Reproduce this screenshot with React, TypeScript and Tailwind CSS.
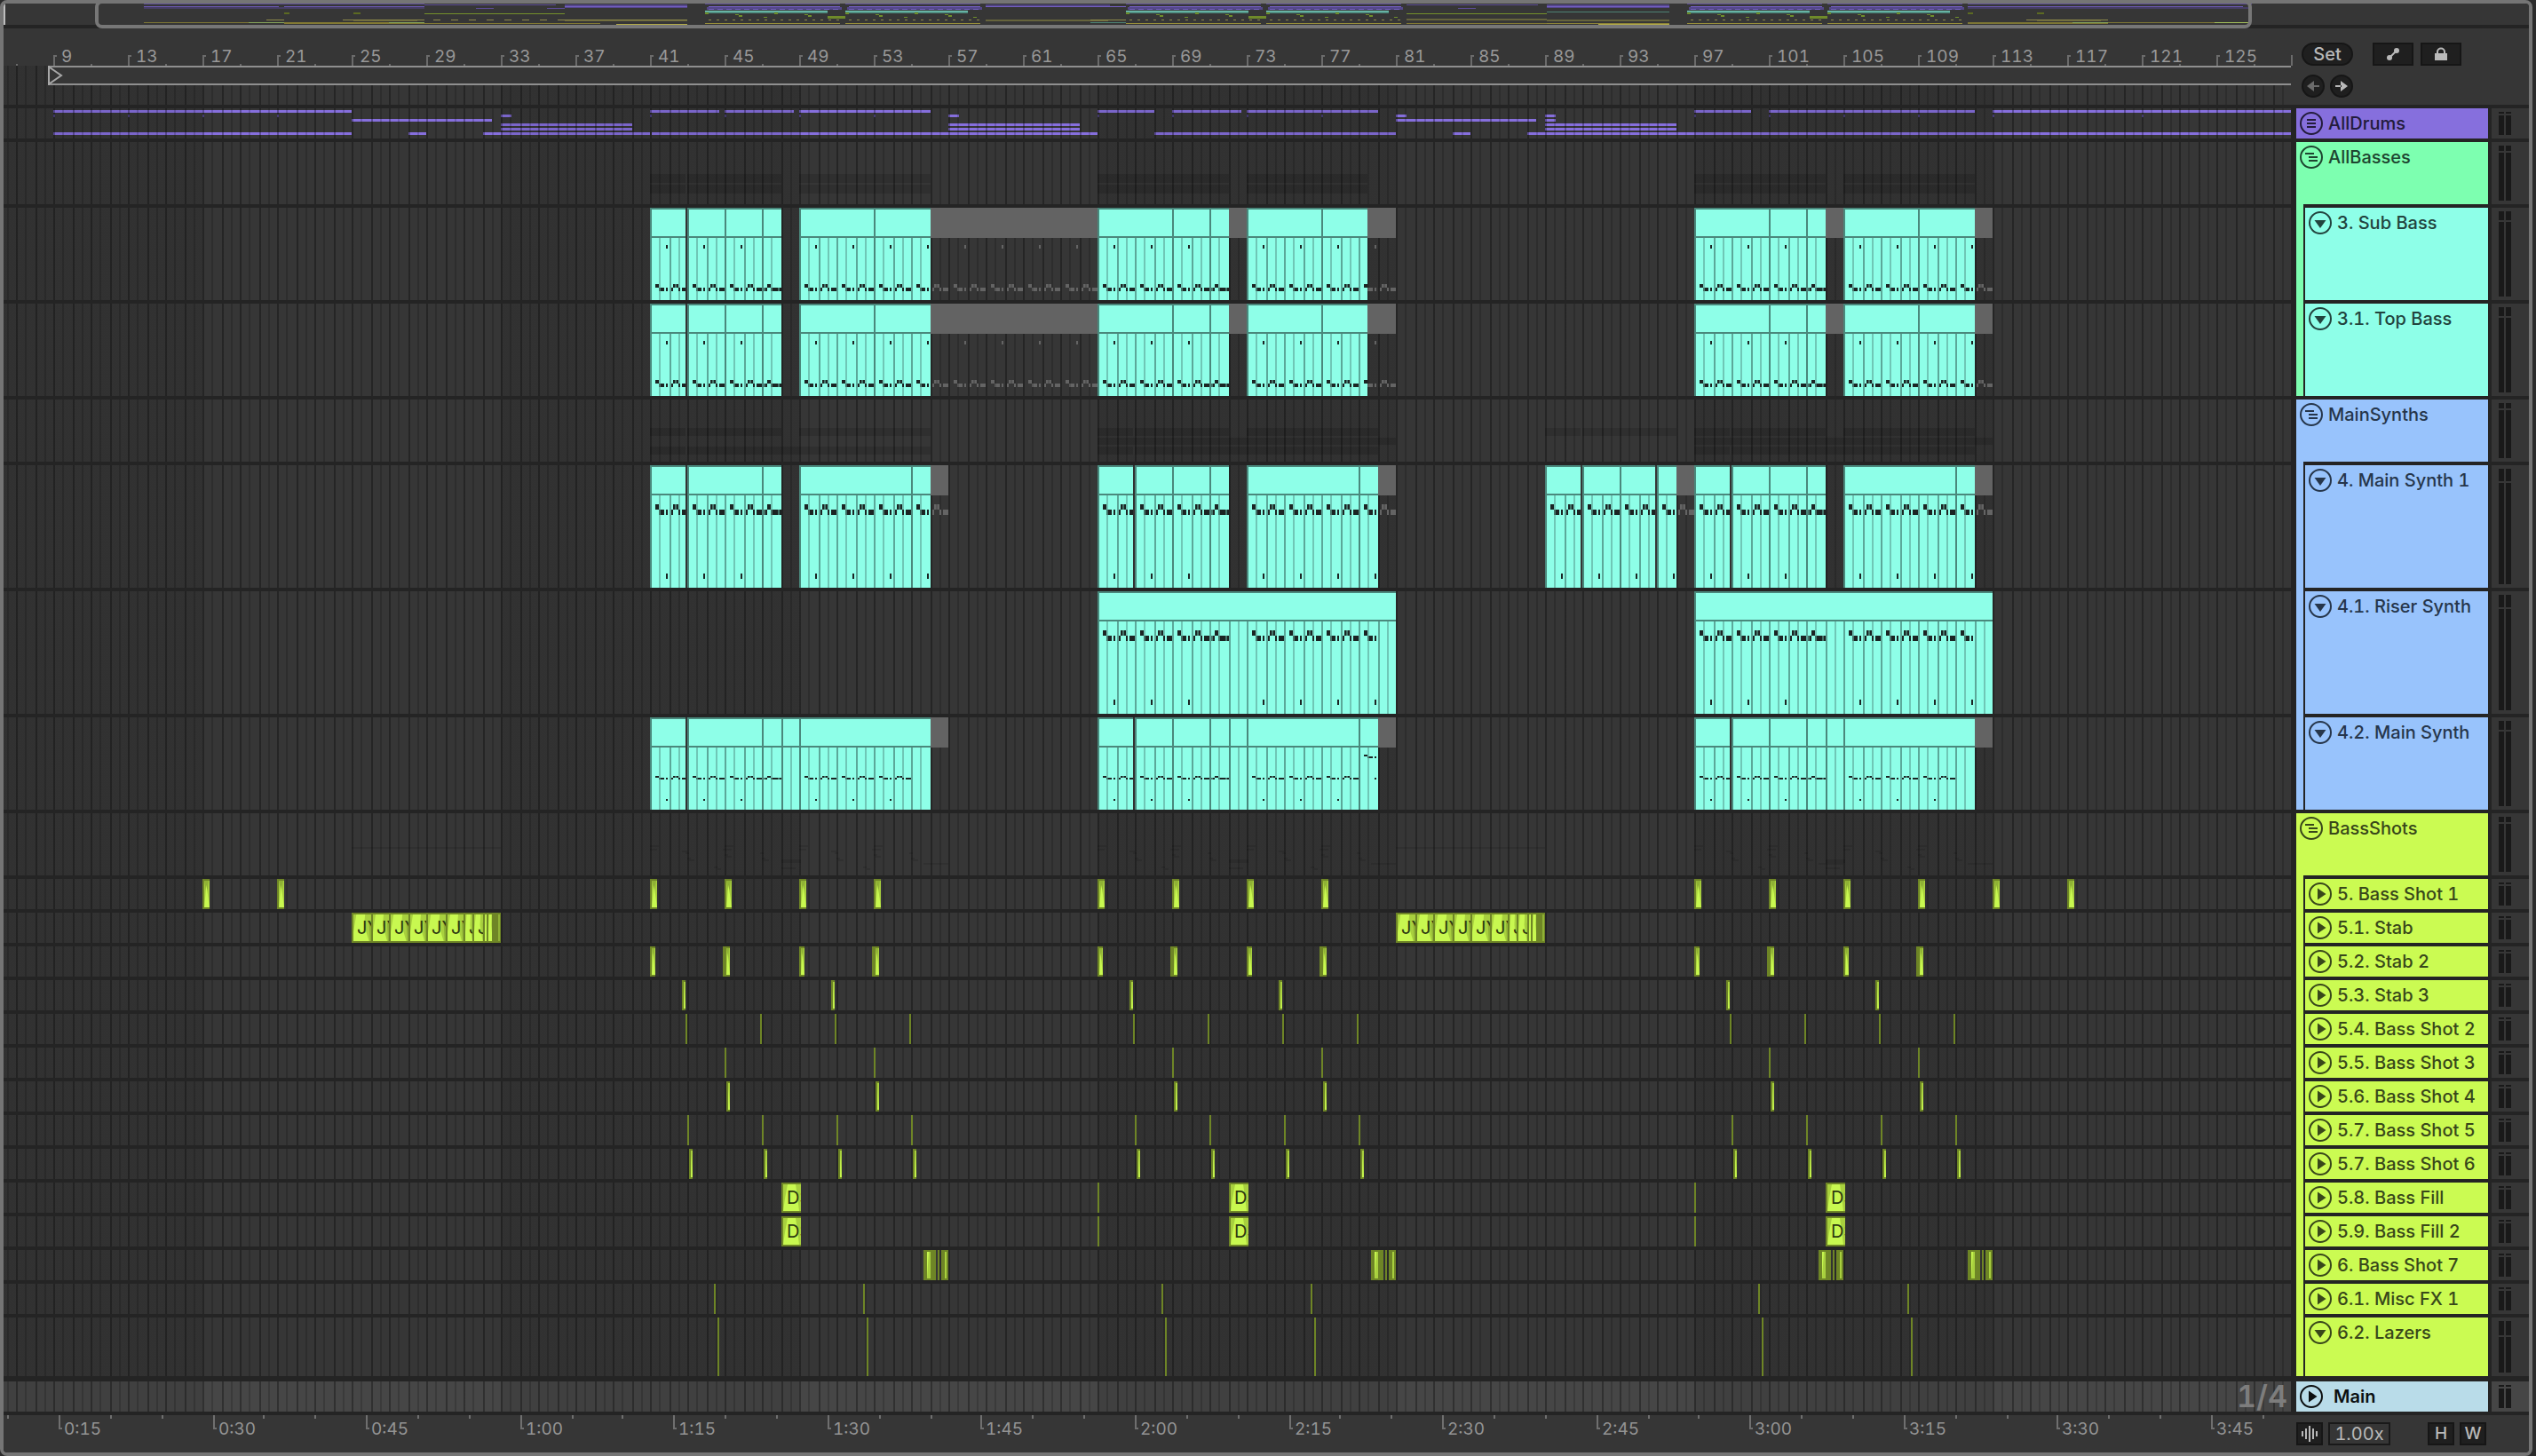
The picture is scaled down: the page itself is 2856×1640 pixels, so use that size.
import type { ReactNode } from 'react';

const BAR = 21;
const FIRST_BAR_X = 56;

// Bar number -> x inside a lane, snapped to 2px
const X = (bar: number) => 2 * Math.round((FIRST_BAR_X + (bar - 9) * BAR) / 2);

const GRID =
  'bg-[repeating-linear-gradient(90deg,transparent_0_4px,#0000002c_4px_6px,transparent_6px_14px,#00000050_14px_16px,transparent_16px_24px,#0000002c_24px_26px,transparent_26px_36px,#00000050_36px_38px,transparent_38px_42px),repeating-linear-gradient(90deg,#00000016_0_224px,transparent_224px_560px,#00000016_560px_672px)]';

const LIME = '#c8f850';
const LIME_DARK = '#6e8526';
const LIME_MID = '#a8d03e';
const CYAN = '#8effe8';
const CYAN_EDGE = '#4a887c';
const PURPLE = '#866fdd';

type Span = [number, number];

/* ---------- MIDI clips ---------- */

type NoteRows = { hi: number; low: number; dot: number; size: number };

// [offset, width, row, faded]
type Cell = [number, number, 'hi' | 'low' | 'dot', boolean?];

const RIFF: Cell[] = [
  [6, 4, 'hi'],
  [10, 2, 'low', true],
  [12, 4, 'low'],
  [18, 2, 'low'],
  [18, 2, 'dot'],
  [24, 2, 'low'],
  [26, 2, 'hi'],
  [28, 2, 'hi', true],
  [30, 2, 'hi'],
  [32, 2, 'low'],
  [36, 6, 'low'],
];

const TURN: Cell[] = [
  [2, 2, 'low', true],
  [4, 2, 'low'],
  [6, 4, 'hi'],
  [10, 2, 'low', true],
  [12, 6, 'low'],
  [18, 2, 'low', true],
  [20, 2, 'low'],
];

const TURN_BARS = [47, 71, 103];

const Notes = ({ from, to, rows, muted }: { from: number; to: number; rows: NoteRows; muted?: boolean }) => {
  const x0 = X(from);
  const x1 = X(to);
  const first = from % 2 >= 1 ? Math.floor(from) : Math.floor(from) - 1;
  const out: ReactNode[] = [];
  for (let base = first; base < to; base += 2) {
    const cells = !muted && TURN_BARS.includes(base) ? TURN : RIFF;
    cells.forEach(([dx, w, row, faded], i) => {
      const x = X(base) + dx;
      if (x < x0 || x >= x1) return;
      const fill = muted ? (faded ? '#555555' : '#646464') : faded ? '#437469' : '#1b2423';
      out.push(
        <rect key={`${base}-${i}`} x={x} y={rows[row]} width={Math.min(w, x1 - x)} height={rows.size} fill={fill} />
      );
    });
  }
  return <>{out}</>;
};

const MidiClip = ({ span, height }: { span: Span; height: number }) => {
  const x = X(span[0]);
  const w = X(span[1]) - x;
  const lines: ReactNode[] = [];
  for (let b = span[0] + 0.5; X(b) < x + w; b += 0.5) {
    lines.push(
      <rect key={b} x={X(b)} y={34} width={2} height={height - 34} fill={b % 1 ? '#6fc7b6' : '#5ba899'} />
    );
  }
  return (
    <g>
      <rect x={x} width={w} height={height} fill={CYAN} />
      {lines}
      <rect x={x} width={w} height={2} fill={CYAN_EDGE} />
      <rect x={x} y={32} width={w} height={2} fill={CYAN_EDGE} />
      <rect x={x} width={2} height={height} fill={CYAN_EDGE} />
    </g>
  );
};

type MidiProps = {
  height: number;
  rows: NoteRows;
  clips: Span[];
  notes: Span[];
  muted?: Span[];
  mutedNotes?: Span[];
};

const MidiLane = ({ height, rows, clips, notes, muted = [], mutedNotes = [] }: MidiProps) => (
  <>
    {clips.map((c) => (
      <MidiClip key={c[0]} span={c} height={height} />
    ))}
    {muted.map(([a, b]) => (
      <rect key={a} x={X(a)} width={X(b) - X(a)} height={34} fill="#636363" />
    ))}
    {notes.map(([a, b]) => (
      <Notes key={a} from={a} to={b} rows={rows} />
    ))}
    {mutedNotes.map(([a, b]) => (
      <Notes key={a} from={a} to={b} rows={rows} muted />
    ))}
  </>
);

const bassRows: NoteRows = { hi: 86, low: 90, dot: 42, size: 4 };
const synthRows: NoteRows = { hi: 44, low: 50, dot: 122, size: 6 };
const thinRows: NoteRows = { hi: 66, low: 68, dot: 92, size: 2 };
const thinHighRows: NoteRows = { hi: 42, low: 44, dot: 68, size: 2 };

const BassLane = ({ lastEnd }: { lastEnd: number }) => (
  <MidiLane
    height={104}
    rows={bassRows}
    clips={[
      [41, 42.9], [43, 45], [45, 47], [47, 48], [49, 53], [53, 56],
      [65, 69], [69, 71], [71, 72], [73, 77], [77, lastEnd],
      [97, 101], [101, 103], [103, 104], [105, 109], [109, 112],
    ]}
    notes={[[41, 42.9], [43, 48], [49, 56], [65, 72], [73, lastEnd], [97, 104], [105, 112]]}
    muted={[[56, 65], [72, 73], [lastEnd, 81], [104, 105], [112, 113]]}
    mutedNotes={[[56, 65], [lastEnd, 81], [112, 113]]}
  />
);

const MainSynthLane = () => (
  <MidiLane
    height={138}
    rows={synthRows}
    clips={[
      [41, 42.9], [43, 47], [47, 48], [49, 55], [55, 56],
      [65, 66.9], [67, 69], [69, 71], [71, 72], [73, 79], [79, 80],
      [89, 90.9], [91, 93], [93, 94.9], [95, 96],
      [97, 98.9], [99, 101], [101, 103], [103, 104], [105, 111], [111, 112],
    ]}
    notes={[[41, 42.9], [43, 48], [49, 56], [65, 66.9], [67, 72], [73, 80], [89, 90.9], [91, 94.9], [95, 96], [97, 98.9], [99, 104], [105, 112]]}
    muted={[[56, 57], [80, 81], [96, 97], [112, 113]]}
    mutedNotes={[[56, 57], [80, 81], [96, 97], [112, 113]]}
  />
);

const RiserLane = () => (
  <MidiLane
    height={138}
    rows={synthRows}
    clips={[[65, 81], [97, 113]]}
    notes={[[65, 72], [73, 80], [97, 104], [105, 112]]}
  />
);

const SecondSynthLane = () => (
  <>
    <MidiLane
      height={104}
      rows={thinRows}
      clips={[
        [41, 42.9], [43, 47], [47, 48], [48, 49], [49, 56],
        [65, 66.9], [67, 69], [69, 71], [71, 72], [72, 73], [73, 79], [79, 80],
        [97, 98.9], [99, 101], [101, 103], [103, 104], [104, 105], [105, 112],
      ]}
      notes={[[41, 42.9], [43, 48], [49, 55], [65, 66.9], [67, 72], [73, 79], [97, 98.9], [99, 104], [105, 111]]}
      muted={[[56, 57], [80, 81], [112, 113]]}
    />
    <Notes from={79} to={80} rows={thinHighRows} />
  </>
);

/* ---------- Group lanes ---------- */

const Ghosts = ({ spans, y, h }: { spans: Span[]; y: number; h: number }) => (
  <>
    {spans.map(([a, b]) => (
      <rect key={a} x={X(a)} y={y} width={X(b) - X(a)} height={h} fill="#000000" fillOpacity={0.13} />
    ))}
  </>
);

const bassGhosts: Span[] = [[41, 42.9], [43, 48], [49, 56], [65, 72], [73, 79.5], [97, 104], [105, 112]];

const AllBassesLane = () => (
  <>
    <Ghosts spans={bassGhosts} y={36} h={10} />
    <Ghosts spans={bassGhosts} y={48} h={10} />
  </>
);

const MainSynthsLane = () => (
  <>
    <Ghosts
      spans={[[41, 42.9], [43, 48], [49, 56], [65, 66.9], [67, 72], [73, 80], [89, 90.9], [91, 96], [97, 98.9], [99, 104], [105, 112]]}
      y={32}
      h={9}
    />
    <Ghosts spans={[[65, 81], [97, 113]]} y={43} h={8} />
    <Ghosts spans={[[41, 42.9], [43, 56], [65, 66.9], [67, 80], [97, 98.9], [99, 112]]} y={53} h={9} />
  </>
);

/* ---------- Drums ---------- */

// [y, [x, width][]] per sub track
const drumRows: [number, Span[]][] = [
  [2, [[56, 336], [728, 78], [812, 78], [896, 148], [1232, 64], [1316, 78], [1400, 148], [1904, 64], [1988, 232], [2240, 336]]],
  [7, [[560, 12], [1064, 12], [1568, 12], [1736, 12]]],
  [12, [[392, 158], [1568, 158], [1736, 12]]],
  [17, [[560, 148], [1064, 148], [1736, 148]]],
  [22, [[560, 148], [1064, 148], [1736, 148]]],
  [27, [[56, 336], [456, 20], [540, 188], [730, 502], [1296, 272], [1632, 20], [1716, 860]]],
];

const drumTicks = [9, 13, 17, 21, 41, 45, 49, 53, 65, 69, 73, 77, 97, 101, 105, 109, 113, 121];

const DrumsLane = () => (
  <>
    {drumRows.map(([y, items]) =>
      items.map(([x, w]) => <rect key={`${y}-${x}`} x={x} y={y} width={w} height={3} fill={PURPLE} />)
    )}
    {drumTicks.map((b) => (
      <rect key={b} x={X(b)} y={7} width={2} height={3} fill="#6454a6" />
    ))}
  </>
);

/* ---------- Audio clips ---------- */

const SECTIONS = [X(41), X(65), X(97)];

// [offset from section start, width, width of the left edge]
type Hit = [number, number, number?];

const HitClip = ({ x, w, h, edge = 2 }: { x: number; w: number; h: number; edge?: number }) => {
  if (w <= 2) return <rect x={x} width={w} height={h} fill={LIME_DARK} />;
  const bx = x + edge;
  const bw = w - edge;
  return (
    <g>
      <rect x={x} width={w} height={h} fill={LIME_DARK} />
      <rect x={bx} y={2} width={bw} height={h - 4} fill={LIME_MID} />
      {w > 4 && <polygon points={`${bx},2 ${bx + bw - 1},2 ${bx + bw / 2},${h * 0.55}`} fill="#8fb135" />}
      <polygon points={`${bx},${h - 2} ${bx + bw / 2 - 0.5},${h * 0.2} ${x + w},${h - 2}`} fill={LIME} />
    </g>
  );
};

const HitLane = ({ hits, extra = [], height = 34, starts = SECTIONS }: { hits: Hit[]; extra?: Hit[]; height?: number; starts?: number[] }) => (
  <>
    {starts.map((s) =>
      hits.map(([o, w, edge]) => <HitClip key={`${s}-${o}`} x={s + o} w={w} h={height} edge={edge} />)
    )}
    {extra.map(([x, w, edge]) => (
      <HitClip key={x} x={x} w={w} h={height} edge={edge} />
    ))}
  </>
);

// [offset, width, label]
const stabs: [number, number, string][] = [
  [0, 22, 'JY'],
  [22, 20, 'JY'],
  [42, 22, 'JY'],
  [64, 20, 'JY'],
  [84, 22, 'JY'],
  [106, 20, 'JY'],
  [126, 10, 'J'],
  [136, 12, 'J'],
  [148, 4, ''],
  [152, 6, ''],
];

const StabLane = () => (
  <>
    {[X(25), X(81)].map((s) => (
      <g key={s}>
        <rect x={s} width={168} height={34} fill={LIME_DARK} />
        {stabs.map(([o, w, label]) => (
          <svg key={o} x={s + o + 2} y={2} width={w - 2} height={30} className="overflow-hidden">
            <rect width={w - 2} height={30} fill={LIME} />
            <polygon points={`0,0 ${w * 0.15},0 0,20`} fill={LIME_MID} />
            <polygon points={`${w * 0.6},0 ${w},0 ${w},30 ${w * 0.8},30 ${w * 0.55},12`} fill={LIME_MID} />
            <polygon points={`${w * 0.8},10 ${w},4 ${w},30 ${w * 0.85},30`} fill="#8fb135" />
            <text x={4} y={22} fontSize={20} fill="#2d3811">{label}</text>
          </svg>
        ))}
        <rect x={s + 165} y={2} width={2} height={30} fill="#8fb135" />
      </g>
    ))}
  </>
);

const FillLane = () => (
  <>
    {[X(48), X(72), X(104)].map((s) => (
      <g key={s}>
        <rect x={s} width={22} height={34} fill={LIME_DARK} />
        <svg x={s + 2} y={2} width={20} height={30} className="overflow-hidden">
          <rect width={20} height={30} fill={LIME} />
          <polygon points="0,0 5,0 2,16 0,30" fill={LIME_MID} />
          <polygon points="14,0 20,0 20,30 18,30 16,14" fill={LIME_MID} />
          <text x={4} y={22} fontSize={20} fill="#2d3811">DS</text>
        </svg>
      </g>
    ))}
    {[X(65), X(97)].map((s) => (
      <rect key={s} x={s} width={2} height={34} fill={LIME_DARK} />
    ))}
  </>
);

const RollLane = () => (
  <>
    {[1036, 1540, 2044, 2212].map((x) => (
      <g key={x}>
        <rect x={x} width={14} height={34} fill={LIME_DARK} />
        <rect x={x + 4} y={2} width={4} height={30} fill={LIME_MID} />
        <polygon points={`${x + 4},2 ${x + 6},2 ${x + 4},32`} fill={LIME} />
        <rect x={x + 16} width={2} height={34} fill={LIME_DARK} />
        <rect x={x + 20} width={8} height={34} fill={LIME_DARK} />
        <rect x={x + 24} y={2} width={2} height={30} fill={LIME_MID} />
      </g>
    ))}
  </>
);

const shot1: Hit[] = [[0, 8], [84, 8], [168, 8], [252, 8]];
const stab2: Hit[] = [[0, 6], [82, 8, 4], [168, 6], [250, 8, 4]];
const stab3: Hit[] = [[36, 4], [204, 4]];
const shot2: Hit[] = [[40, 2], [124, 2], [208, 2], [292, 2]];
const shot3: Hit[] = [[84, 2], [252, 2]];
const shot4: Hit[] = [[86, 4], [254, 4]];
const shot5: Hit[] = [[42, 2], [126, 2], [210, 2], [294, 2]];
const shot6: Hit[] = [[44, 4], [128, 4], [212, 4], [296, 4]];
const misc: Hit[] = [[72, 2], [240, 2]];
const lazers: Hit[] = [[76, 2], [244, 2]];

const BassShotsLane = () => (
  <g fill="#000000" fillOpacity={0.1}>
    {[shot1, [], stab2, stab3, shot2, shot3, shot4, shot5, shot6, [], [], [], misc, lazers].map((hits, i) =>
      SECTIONS.map((s) => hits.map(([o, w]) => <rect key={`${i}-${s}-${o}`} x={s + o} y={36 + i * 2} width={w + 2} height={2} />))
    )}
    {[X(25), X(81)].map((s) => (
      <rect key={s} x={s} y={38} width={168} height={2} />
    ))}
    {[X(48), X(72), X(104)].map((s) => (
      <g key={s}>
        <rect x={s} y={52} width={22} height={4} />
        <rect x={s} y={61} width={16} height={2} />
      </g>
    ))}
    {[1036, 1540, 2044, 2212].map((x) => (
      <rect key={x} x={x} y={56} width={28} height={2} />
    ))}
  </g>
);

/* ---------- Track list ---------- */

type IconKind = 'list' | 'group' | 'down' | 'right';

const TrackIcon = ({ kind }: { kind: IconKind }) => (
  <svg viewBox="0 0 26 26" className="size-[26px]" fill="none" stroke="currentColor" strokeWidth={2}>
    <circle cx={13} cy={13} r={12} />
    {kind === 'list' && <path d="M8 9h10M8 13h10M8 17h10" />}
    {kind === 'group' && <path d="M6 9h10M10 13h10M10 17h10" />}
    {kind === 'down' && <path d="M6.5 10h13L13 19z" fill="currentColor" stroke="none" />}
    {kind === 'right' && <path d="M10 6.5v13l9.5-6.5z" fill="currentColor" stroke="none" />}
  </svg>
);

type Track = {
  name: string;
  color: string;
  height: string;
  icon: IconKind;
  strip?: string;
  peak: string;
  lane?: ReactNode;
  gridOnTop?: boolean;
};

const purple = 'bg-[#866fdd] text-[#231c3c]';
const green = 'bg-[#7dffb0] text-[#1e4630]';
const cyan = 'bg-[#8effe8] text-[#22443e]';
const blue = 'bg-[#98c3fc] text-[#26364b]';
const lime = 'bg-[#cbfb52] text-[#38471a]';

const greenStrip = 'bg-[#7dffb0]';
const blueStrip = 'bg-[#98c3fc]';
const limeStrip = 'bg-[#cbfb52]';

const small = { color: lime, height: 'h-[34px]', icon: 'right' as IconKind, strip: limeStrip, peak: 'h-[2px]' };

const tracks: Track[] = [
  { name: 'AllDrums', color: purple, height: 'h-[34px]', icon: 'list', peak: 'h-[2px]', lane: <DrumsLane />, gridOnTop: true },
  { name: 'AllBasses', color: green, height: 'h-[70px]', icon: 'group', peak: 'h-[6px]', lane: <AllBassesLane /> },
  { name: '3. Sub Bass', color: cyan, height: 'h-[104px]', icon: 'down', strip: greenStrip, peak: 'h-[10px]', lane: <BassLane lastEnd={79.5} /> },
  { name: '3.1. Top Bass', color: cyan, height: 'h-[104px]', icon: 'down', strip: greenStrip, peak: 'h-[10px]', lane: <BassLane lastEnd={79.5} /> },
  { name: 'MainSynths', color: blue, height: 'h-[70px]', icon: 'group', peak: 'h-[6px]', lane: <MainSynthsLane /> },
  { name: '4. Main Synth 1', color: blue, height: 'h-[138px]', icon: 'down', strip: blueStrip, peak: 'h-[14px]', lane: <MainSynthLane /> },
  { name: '4.1. Riser Synth', color: blue, height: 'h-[138px]', icon: 'down', strip: blueStrip, peak: 'h-[14px]', lane: <RiserLane /> },
  { name: '4.2. Main Synth', color: blue, height: 'h-[104px]', icon: 'down', strip: blueStrip, peak: 'h-[10px]', lane: <SecondSynthLane /> },
  { name: 'BassShots', color: lime, height: 'h-[70px]', icon: 'group', peak: 'h-[6px]', lane: <BassShotsLane /> },
  { ...small, name: '5. Bass Shot 1', lane: <HitLane hits={shot1} extra={[[X(17), 8], [X(21), 8], [X(113), 8], [X(117), 8]]} /> },
  { ...small, name: '5.1. Stab', lane: <StabLane /> },
  { ...small, name: '5.2. Stab 2', lane: <HitLane hits={stab2} /> },
  { ...small, name: '5.3. Stab 3', lane: <HitLane hits={stab3} /> },
  { ...small, name: '5.4. Bass Shot 2', lane: <HitLane hits={shot2} /> },
  { ...small, name: '5.5. Bass Shot 3', lane: <HitLane hits={shot3} /> },
  { ...small, name: '5.6. Bass Shot 4', lane: <HitLane hits={shot4} /> },
  { ...small, name: '5.7. Bass Shot 5', lane: <HitLane hits={shot5} /> },
  { ...small, name: '5.7. Bass Shot 6', lane: <HitLane hits={shot6} /> },
  { ...small, name: '5.8. Bass Fill', lane: <FillLane /> },
  { ...small, name: '5.9. Bass Fill 2', lane: <FillLane /> },
  { ...small, name: '6. Bass Shot 7', lane: <RollLane /> },
  { ...small, name: '6.1. Misc FX 1', lane: <HitLane hits={misc} /> },
  { name: '6.2. Lazers', color: lime, height: 'h-[66px]', icon: 'down', strip: limeStrip, peak: 'h-[16px]', lane: <HitLane hits={lazers} height={66} /> },
];

const Meter = ({ peak, bg }: { peak: string; bg: string }) => (
  <div className={`flex w-[42px] gap-0.5 py-1 pl-2 ${bg}`}>
    {[0, 1].map((i) => (
      <div key={i} className="flex w-1.5 flex-col gap-0.5">
        <div className={`bg-[#191919] ${peak}`} />
        <div className="flex-1 bg-[#191919]" />
      </div>
    ))}
  </div>
);

const TrackRow = ({ track }: { track: Track }) => (
  <div className="flex">
    <div className={`relative mt-1 min-w-0 flex-1 overflow-hidden bg-[#363636] ${track.height}`}>
      <svg className={`block size-full ${track.gridOnTop ? '' : GRID}`}>{track.lane}</svg>
      {track.gridOnTop && <div className={`absolute inset-0 ${GRID}`} />}
    </div>
    <div className="ml-1.5 flex w-[216px] gap-0.5">
      {track.strip && <div className={`w-2 ${track.strip}`} />}
      <div className={`mt-1 flex flex-1 items-start gap-1.5 p-1 ${track.color}`}>
        <button aria-label={`Unfold ${track.name}`}>
          <TrackIcon kind={track.icon} />
        </button>
        <span className="text-xl leading-[26px] font-medium whitespace-nowrap tabular-nums">{track.name}</span>
      </div>
    </div>
    <div className="mt-1 ml-1 flex">
      <Meter peak={track.peak} bg="bg-[#363636]" />
    </div>
  </div>
);

/* ---------- Overview ---------- */

const OV = (bar: number) => 158 + (bar - 9) * 19.75;

const dashes = (from: number, to: number, y: number, step: number, w: number, fill: string) => {
  const out: ReactNode[] = [];
  for (let x = from; x < to; x += step) {
    out.push(<rect key={`${y}-${x}`} x={x} y={y} width={w} height={1} fill={fill} />);
  }
  return out;
};

const overview: [number, number, number, number, string][] = [
  [158, 0, 316, 1, '#5c4c96'],
  [158, 3, 152, 1, '#6c59b4'],
  [316, 3, 158, 1, '#6c59b4'],
  [158, 4, 316, 2, '#453d63'],
  [316, 10, 6, 2, '#5c6a22'],
  [394, 10, 8, 2, '#5c6a22'],
  [296, 18, 20, 1, '#8f8a4a'],
  [382, 18, 92, 1, '#8f8a4a'],
  [394, 19, 72, 1, '#5f5d38'],
  [158, 21, 118, 1, '#7d7634'],
  [276, 21, 40, 1, '#86a45a'],
  [316, 21, 158, 2, '#837a33'],
  [434, 21, 40, 1, '#86a45a'],
  [474, 1, 148, 1, '#5c4c96'],
  [532, 5, 20, 1, '#5c4c96'],
  [612, 5, 20, 1, '#5c4c96'],
  [474, 11, 158, 1, '#75902a'],
  [474, 22, 158, 1, '#837a33'],
  [632, 1, 138, 4, '#54478a'],
  [632, 3, 138, 1, '#7560c4'],
  [632, 18, 138, 1, '#8f8a4a'],
  [632, 19, 138, 1, '#5f5d38'],
  [632, 22, 40, 1, '#837a33'],
  [690, 23, 80, 1, '#b0a94a'],
  [1106, 1, 140, 3, '#4f447d'],
  [1106, 3, 158, 1, '#7560c4'],
  [1106, 18, 138, 2, '#66643c'],
  [1224, 18, 40, 1, '#8f8a4a'],
  [1224, 21, 40, 1, '#4d8274'],
  [1580, 1, 148, 1, '#5c4c96'],
  [1638, 5, 20, 1, '#5c4c96'],
  [1580, 11, 158, 1, '#75902a'],
  [1580, 17, 158, 2, '#66643c'],
  [1580, 22, 158, 1, '#837a33'],
  [1738, 1, 138, 4, '#54478a'],
  [1738, 3, 138, 1, '#7560c4'],
  [1738, 9, 138, 1, '#4d8274'],
  [1738, 18, 138, 2, '#66643c'],
  [1738, 22, 138, 1, '#8f8537'],
  [1796, 23, 80, 1, '#b0a94a'],
  [2212, 0, 320, 1, '#5c4c96'],
  [2212, 3, 310, 1, '#6c59b4'],
  [2212, 4, 320, 2, '#453d63'],
  [2212, 10, 6, 2, '#5c6a22'],
  [2290, 10, 8, 2, '#5c6a22'],
  [2278, 18, 92, 1, '#8f8a4a'],
  [2290, 19, 72, 1, '#5f5d38'],
  [2212, 21, 158, 2, '#7d7634'],
  [2330, 21, 40, 1, '#86a45a'],
  [2370, 21, 120, 1, '#7d7634'],
  [2490, 21, 40, 1, '#a3bf5a'],
];

// Eight-bar blocks with everything playing
const fullBlocks = [41, 49, 65, 73, 97, 105];

const Overview = () => (
  <div className="relative h-7 bg-[#363636]">
    <svg className="block h-6 w-full" shapeRendering="crispEdges">
      <rect width={2} height={24} fill="#bdbdbd" />
      {overview.map(([x, y, w, h, fill], i) => (
        <rect key={i} x={x} y={y} width={w} height={h} fill={fill} />
      ))}
      {dashes(484, 632, 18, 20, 8, '#8f8a4a')}
      {fullBlocks.map((bar) => (
        <g key={bar}>
          <rect x={OV(bar)} y={0} width={152} height={1} fill="#5c4c96" />
          <rect x={OV(bar) + 4} y={3} width={148} height={1} fill="#7560c4" />
          <rect x={OV(bar) + 2} y={4} width={152} height={3} fill="#54478a" />
          {dashes(OV(bar) + 4, OV(bar) + 150, 6, 10, 6, '#7560c4')}
          <rect x={OV(bar)} y={8} width={138} height={1} fill="#79d0bf" />
          <rect x={OV(bar)} y={9} width={138} height={2} fill="#529183" />
          {[0, 78].map((o) => (
            <g key={o} fill="#6f8f2b">
              <rect x={OV(bar) + o} y={10} width={4} height={2} />
              <rect x={OV(bar) + o + 34} y={12} width={4} height={1} />
              <rect x={OV(bar) + o + 38} y={13} width={4} height={2} />
              <rect x={OV(bar) + o + 66} y={15} width={4} height={1} />
            </g>
          ))}
          {dashes(OV(bar) + 4, OV(bar) + 156, 18, 9, 3, '#8f8a4a')}
          <rect x={OV(bar)} y={22} width={152} height={1} fill="#99903a" />
        </g>
      ))}
      {[41, 65, 97].map((bar) => (
        <rect key={bar} x={OV(bar + 7)} y={14} width={20} height={3} fill="#6f8a2a" />
      ))}
    </svg>
    <div className="h-1 bg-[#242424]" />
    <div className="absolute -top-1 right-[312px] bottom-0 left-[103px] rounded-lg border-4 border-[#777777]" />
  </div>
);

/* ---------- Rulers ---------- */

const barNumbers = Array.from({ length: 30 }, (_, i) => 9 + i * 4);

const BarRuler = () => (
  <div className="min-w-0 flex-1">
    <svg className="block h-[42px] w-full overflow-visible tabular-nums" fill="#6b6b6b">
      {barNumbers.map((n) => (
        <g key={n}>
          <rect x={X(n)} y={30} width={2} height={12} />
          <rect x={X(n)} y={30} width={4} height={2} />
          <rect x={X(n) - 42} y={40} width={2} height={2} />
          <text x={X(n) + 9} y={38} fontSize={19} fill="#989898">{n}</text>
        </g>
      ))}
      <rect x={X(127)} y={40} width={2} height={2} />
      <rect x={X(129)} y={30} width={2} height={12} />
    </svg>
    <div className="h-11 bg-[#363636]">
      <svg className={`block size-full ${GRID}`} shapeRendering="crispEdges">
        <rect x={50} width="100%" height={22} fill="#363636" />
        <rect x={50} width="100%" height={2} fill="#8f8f8f" />
        <rect x={50} y={20} width="100%" height={2} fill="#8f8f8f" />
        <rect x={50} width={2} height={22} fill="#a8a8a8" />
        <path d="M52 2l13 9-13 9" fill="none" stroke="#a8a8a8" strokeWidth={2} shapeRendering="auto" />
      </svg>
    </div>
  </div>
);

const seconds = Array.from({ length: 45 }, (_, i) => 5 + (i + 1) * 5);

const timeX = (s: number) => 2 * Math.round((62 + ((s - 15) / 15) * 173.15) / 2);

const TimeRuler = () => (
  <svg className="block h-[42px] min-w-0 flex-1 tabular-nums" fill="#6f6f6f">
    {seconds.map((s) =>
      s % 15 ? (
        <rect key={s} x={timeX(s)} width={2} height={4} />
      ) : (
        <g key={s}>
          <rect x={timeX(s)} width={2} height={16} />
          <rect x={timeX(s)} y={14} width={4} height={2} />
          <text x={timeX(s) + 6} y={22} fontSize={19} fill="#939393">
            {`${Math.floor(s / 60)}:${String(s % 60).padStart(2, '0')}`}
          </text>
        </g>
      )
    )}
    <rect x={4} width={2} height={4} />
  </svg>
);

const box = 'flex h-[26px] items-center justify-center border-2 border-[#161616] bg-[#1f1f1f] text-[#b9b9b9]';

const Controls = () => (
  <div className="flex w-[268px] flex-col gap-2.5 pt-4 pl-3">
    <div className="flex">
      <button className={`${box} w-[58px] rounded-full text-xl font-medium`}>Set</button>
      <button aria-label="Automation mode" className={`${box} ml-[22px] w-[46px]`}>
        <svg viewBox="0 0 16 16" className="size-4" fill="currentColor">
          <circle cx={4} cy={12} r={3} />
          <circle cx={12} cy={4} r={3} />
          <path d="M4 12l8-8" stroke="currentColor" strokeWidth={2} />
        </svg>
      </button>
      <button aria-label="Lock envelopes" className={`${box} ml-2 w-[46px]`}>
        <svg viewBox="0 0 16 16" className="size-4" fill="currentColor">
          <rect x={1} y={7} width={14} height={8} />
          <path d="M4 8V5.5a4 4 0 0 1 8 0V8" fill="none" stroke="currentColor" strokeWidth={2} />
        </svg>
      </button>
    </div>
    <div className="flex gap-1.5">
      <button aria-label="Previous locator" className={`${box} w-[26px] rounded-full`}>
        <svg viewBox="0 0 16 16" className="size-4 shrink-0 text-[#6a6a6a]" fill="currentColor">
          <path d="M1 8l8-6v12zM8 7h7v2H8z" />
        </svg>
      </button>
      <button aria-label="Next locator" className={`${box} w-[26px] rounded-full`}>
        <svg viewBox="0 0 16 16" className="size-4 shrink-0" fill="currentColor">
          <path d="M15 8L7 2v12zM1 7h7v2H1z" />
        </svg>
      </button>
    </div>
  </div>
);

const App = () => {
  return (
    <div className="min-h-screen bg-[#2b2b2b] pr-1 font-['Inter',sans-serif]">
      <div className="flex min-h-screen flex-col overflow-hidden rounded-lg border-4 border-[#757575] bg-[#242424]">
        <Overview />

        <header className="flex bg-[#363636]">
          <BarRuler />
          <Controls />
        </header>

        <main>
          {tracks.map((t) => (
            <TrackRow key={t.name} track={t} />
          ))}

          {/* Main track */}
          <div className="flex pt-1.5 pb-1">
            <div className="min-w-0 flex-1 bg-[#464646]">
              <div className={`flex h-[34px] items-center justify-end pr-1 text-[34px] leading-8 font-semibold text-[#7d7d7d] tabular-nums ${GRID}`}>
                1/4
              </div>
            </div>
            <div className="ml-1.5 flex w-[216px] items-start gap-3 bg-[#b9dce9] p-1 text-[#0c0f10]">
              <button aria-label="Unfold Main">
                <TrackIcon kind="right" />
              </button>
              <span className="text-xl leading-[26px] font-semibold">Main</span>
            </div>
            <div className="ml-1 flex">
              <Meter peak="h-[2px]" bg="bg-[#464646]" />
            </div>
          </div>
        </main>

        <footer className="flex flex-1 bg-[#363636]">
          <TimeRuler />
          <div className="ml-1.5 flex w-[262px] pt-2">
            <button aria-label="Optimize height" className={`${box} w-[30px]`}>
              <svg viewBox="0 0 18 18" className="size-[18px] shrink-0" stroke="currentColor" strokeWidth={2}>
                <path d="M1 6v6M5 3v12M9 0v18M13 3v12M17 6v6" />
              </svg>
            </button>
            <input
              aria-label="Tempo scale"
              defaultValue="1.00x"
              className="ml-1.5 h-[26px] w-[70px] border-2 border-[#191919] bg-[#363636] text-center text-xl text-[#b9b9b9] tabular-nums"
            />
            <button className={`${box} ml-[42px] w-[30px] text-[19px] font-medium`}>H</button>
            <button className={`${box} ml-1.5 w-[30px] text-[19px] font-medium`}>W</button>
          </div>
        </footer>
      </div>
    </div>
  );
};

export default App;
